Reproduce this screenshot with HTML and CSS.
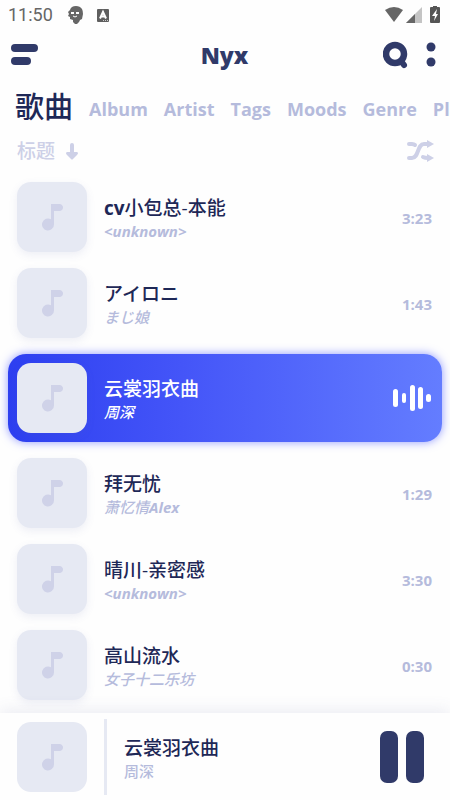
FILE: index.html
```html
<!DOCTYPE html>
<html lang="zh">
<head>
<meta charset="utf-8">
<meta name="viewport" content="width=device-width, initial-scale=1">
<title>Nyx</title>
<link rel="stylesheet" href="styles.css">
</head>
<body>
<svg class="defs" aria-hidden="true">
  <symbol id="note" viewBox="0 0 24 28">
    <path d="M11 1h9q3 1 3 3.500T20 8h-6v13.500a6 6 0 1 1-3-5.200z"/>
  </symbol>
</svg>
<div class="app">
  <div class="status">
    <span class="clock">11:50</span>
    <svg class="face" width="16" height="18" viewBox="0 0 16 18" aria-hidden="true">
      <path fill="#666" d="M8 0q4 0 6 3 1 2 1 5l-1 5-2 1-1 2-2 2H7l-2-2v-2l-3-1v-2l-2-1 1-2-1-2 2-2q1-4 6-4z"/>
      <path fill="#fff" d="M3 6h3v2H3zM8 6h3v2H8z"/>
      <path stroke="#fff" fill="none" d="M5 10q2 2 4 0"/>
    </svg>
    <svg class="badge" width="12" height="13" viewBox="0 0 12 13" aria-hidden="true">
      <rect width="12" height="13" rx="1" fill="#5f5f5f"/>
      <path stroke="#fff" stroke-width="2" fill="none" d="M3 9.500 6 3l3 6.500M4 7.500h4"/>
      <path stroke="#ccc" d="M6 11.500h5" stroke-dasharray="1 1"/>
    </svg>
    <svg class="signals" width="58" height="18" viewBox="0 0 58 18" aria-hidden="true">
      <path fill="#666" d="M1 4q9-6 18 0L10 16z"/>
      <path fill="#c4c4c4" d="M22 17 38 1v16z"/>
      <path fill="#666" d="M22 17 31 8v9z"/>
      <path fill="#555" d="M49 0h4v1h2q1 0 1 1v14q0 1-1 1h-8q-1 0-1-1V2q0-1 1-1h2z"/>
      <path fill="#fff" d="M53 3l-5 7h3l-1 5 4-7h-2z"/>
    </svg>
  </div>

  <header class="bar">
    <button class="icon" aria-label="Menu">
      <svg width="28" height="22" viewBox="0 0 28 22"><rect width="27" height="8" rx="4"/><rect y="13" width="20" height="8" rx="4"/></svg>
    </button>
    <h1>Nyx</h1>
    <div class="actions">
      <button class="icon" aria-label="Search">
        <svg width="26" height="28" viewBox="0 0 26 28"><circle cx="12" cy="13" r="9" fill="none" stroke="#303a69" stroke-width="6.500"/><path d="M18 20l3 4" stroke="#303a69" stroke-width="6" stroke-linecap="round"/></svg>
      </button>
      <button class="icon" aria-label="More">
        <svg width="10" height="26" viewBox="0 0 10 26"><circle cx="5" cy="5" r="4.500"/><circle cx="5" cy="20" r="4.500"/></svg>
      </button>
    </div>
  </header>

  <nav class="tabs">
    <a class="current" href="#songs">歌曲</a>
    <a href="#album">Album</a>
    <a href="#artist">Artist</a>
    <a href="#tags">Tags</a>
    <a href="#moods">Moods</a>
    <a href="#genre">Genre</a>
    <a href="#playlists">Playlists</a>
  </nav>

  <div class="sort">
    <button class="order">标题
      <svg width="12" height="18" viewBox="0 0 12 18" aria-hidden="true"><path d="M4 3q0-2 2-2t2 2v7h3q2 1 0 3l-4 4q-1 1-2 0l-4-4q-2-2 0-3h3z"/></svg>
    </button>
    <button class="icon" aria-label="Shuffle">
      <svg width="27" height="22" viewBox="0 0 27 22"><path fill="none" stroke="#cdd0e7" stroke-width="4" stroke-linecap="round" d="M2 4h3q2 0 3 1M2 18h3c7 0 5-14 12-14h4M16 17q2 1 5 1"/><path d="M20 0l7 4-7 4zM20 14l7 4-7 4z"/></svg>
    </button>
  </div>

  <ul class="songs" id="songs">
    <li><button class="song"><span class="cover"><svg><use href="#note"/></svg></span><span class="info"><span class="title"><b>cv</b>小包总-本能</span><span class="artist"><b>&lt;unknown&gt;</b></span></span><span class="time">3:23</span></button></li>
    <li><button class="song"><span class="cover"><svg><use href="#note"/></svg></span><span class="info"><span class="title" lang="ja">アイロニ</span><span class="artist" lang="ja">まじ娘</span></span><span class="time">1:43</span></button></li>
    <li><button class="song playing"><span class="cover"><svg><use href="#note"/></svg></span><span class="info"><span class="title">云裳羽衣曲</span><span class="artist">周深</span></span>
      <svg class="wave" width="38" height="28" viewBox="0 0 38 28" aria-hidden="true"><rect y="5" width="5" height="18" rx="2.500"/><rect x="9" y="9" width="4" height="10" rx="2"/><rect x="17" y="1" width="5" height="26" rx="2.500"/><rect x="25" y="3" width="5" height="22" rx="2.500"/><rect x="33" y="10" width="5" height="8" rx="2.500"/></svg></button></li>
    <li><button class="song"><span class="cover"><svg><use href="#note"/></svg></span><span class="info"><span class="title">拜无忧</span><span class="artist">萧忆情<b>Alex</b></span></span><span class="time">1:29</span></button></li>
    <li><button class="song"><span class="cover"><svg><use href="#note"/></svg></span><span class="info"><span class="title">晴川-亲密感</span><span class="artist"><b>&lt;unknown&gt;</b></span></span><span class="time">3:30</span></button></li>
    <li><button class="song"><span class="cover"><svg><use href="#note"/></svg></span><span class="info"><span class="title">高山流水</span><span class="artist">女子十二乐坊</span></span><span class="time">0:30</span></button></li>
  </ul>

  <footer class="player">
    <span class="cover"><svg><use href="#note"/></svg></span>
    <div class="info now"><span class="title">云裳羽衣曲</span><span class="artist">周深</span></div>
    <button class="icon" aria-label="Pause">
      <svg width="44" height="54" viewBox="0 0 44 54"><rect y="1" width="18" height="52" rx="7"/><rect x="26" y="1" width="18" height="52" rx="7"/></svg>
    </button>
  </footer>
</div>
</body>
</html>
```

FILE: styles.css
```css
* { box-sizing: border-box; }

body {
  margin: 0;
  background: #fefefe;
  color: #1e2857;
  font-family: "Open Sans", "Noto Sans CJK SC", sans-serif;
}

:lang(ja) { font-family: "Open Sans", "Noto Sans CJK JP", sans-serif; }

button {
  margin: 0;
  padding: 0;
  border: 0;
  background: none;
  color: inherit;
  font: inherit;
  text-align: left;
}

svg { display: block; flex: none; }
.defs { position: absolute; width: 0; height: 0; }

.app {
  display: flex;
  flex-direction: column;
  height: 100vh;
  overflow: hidden;
}

.status {
  display: flex;
  align-items: center;
  flex: none;
  height: 30px;
  padding: 0 8px;
}
.clock {
  color: #666;
  font: 18px/32px Roboto, sans-serif;
}
.face { margin-left: 15px; }
.badge { margin-left: 13px; }
.signals { margin-left: auto; }

.bar {
  display: grid;
  grid-template-columns: 1fr auto 1fr;
  align-items: center;
  flex: none;
  height: 50px;
  padding: 0 14px 0 13px;
}
.bar > .icon { margin-left: -2px; }
.bar h1 {
  margin: 0;
  color: #303a69;
  font-size: 23px;
  font-weight: 800;
  line-height: 32px;
}
.icon { fill: #303a69; }
.actions {
  display: flex;
  justify-content: flex-end;
  align-items: center;
  gap: 17px;
}

.tabs {
  display: flex;
  align-items: center;
  flex: none;
  gap: 16px;
  height: 53px;
  padding-left: 15px;
  overflow: hidden;
  white-space: nowrap;
}
.tabs a {
  padding-top: 4px;
  color: #b5bbdc;
  font-size: 18px;
  font-weight: 700;
  line-height: 28px;
  text-decoration: none;
}
.tabs .current {
  padding-top: 0;
  color: #1e2857;
  font-size: 29px;
  font-weight: 500;
  line-height: 44px;
}

.sort {
  display: flex;
  align-items: center;
  justify-content: space-between;
  flex: none;
  height: 36px;
  padding: 0 16px 0 17px;
}
.order {
  display: flex;
  align-items: center;
  gap: 11px;
  color: #cdd0e7;
  fill: #cdd0e7;
  font-size: 19px;
  font-weight: 500;
  line-height: 28px;
}
.sort .icon { fill: #cdd0e7; }

.songs {
  display: flex;
  flex-direction: column;
  flex: 1;
  gap: 16px;
  min-height: 0;
  margin: 0;
  padding: 13px 8px 0;
  list-style: none;
}
.song {
  display: flex;
  align-items: center;
  width: 100%;
  padding: 0 10px 0 9px;
}
.playing {
  padding: 9px 11px 9px 9px;
  border-radius: 18px;
  background: linear-gradient(90deg, #2d3ff0, #4455f8 40%, #647dff);
  box-shadow: 0 0 10px rgba(70, 85, 255, 0.6);
  color: #fff;
}

.cover {
  display: flex;
  align-items: center;
  justify-content: center;
  flex: none;
  width: 70px;
  height: 70px;
  border-radius: 14px;
  background: #e6e9f3;
  box-shadow: 0 3px 8px rgba(90, 100, 170, 0.1);
}
.cover svg {
  width: 24px;
  height: 28px;
  fill: #cfd2e8;
}

.info {
  display: flex;
  flex: 1;
  flex-direction: column;
  min-width: 0;
  margin-left: 17px;
  padding-top: 3px;
}
.title {
  font-size: 19px;
  font-weight: 500;
  line-height: 26px;
}
.artist {
  color: #b5bbdc;
  font-size: 15px;
  font-style: italic;
  font-weight: 500;
  line-height: 21px;
}
.playing .artist { color: #fff; }
.time {
  padding-top: 2px;
  color: #b5bbdc;
  font-size: 15px;
  font-weight: 700;
}
.wave { fill: #fff; }

.player {
  display: flex;
  align-items: center;
  flex: none;
  height: 87px;
  padding: 0 26px 0 17px;
  background: #fefefe;
  box-shadow: 0 -2px 16px rgba(80, 90, 150, 0.12);
}
.player .cover { box-shadow: none; }
.now {
  justify-content: center;
  height: 76px;
  padding-left: 17px;
  border-left: 3px solid #e6e9f3;
}
.now .artist { font-style: normal; }
```
